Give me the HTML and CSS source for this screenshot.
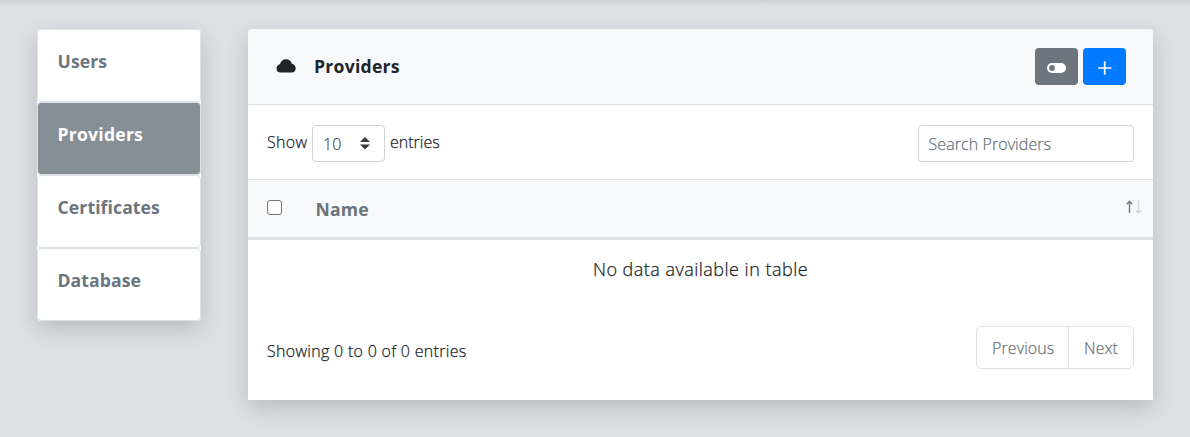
FILE: index.html
```
<!DOCTYPE html>
<html lang="en">
<head>
<meta charset="utf-8">
<title>Providers</title>
<link rel="stylesheet" href="styles.css">
</head>
<body>
<div class="topbar"></div>
<main class="layout">
  <nav class="side">
    <a class="side-item">Users</a>
    <a class="side-item active">Providers</a>
    <a class="side-item">Certificates</a>
    <a class="side-item">Database</a>
  </nav>
  <section class="card">
    <header class="card-header">
      <svg class="cloud" viewBox="0 0 20 14" width="20" height="14"><path d="M4.6 13.500A4.100 4.100 0 0 1 .5 9.500C.5 7.400 2 5.900 4 5C4.900 2.100 7 .3 10 .3c3 0 5.200 1.700 5.800 4.500 2.300.3 3.900 2.300 3.900 4.600s-1.700 4.100-3.900 4.100z"/></svg>
      <h1 class="title">Providers</h1>
      <div class="actions">
        <button class="btn btn-gray" aria-label="Toggle"><svg viewBox="0 0 20 10" width="20" height="10"><rect width="19" height="10" rx="5" fill="#fff"/><circle cx="5" cy="5" r="2.900" fill="#6c757d"/></svg></button>
        <button class="btn btn-blue" aria-label="Add"><svg viewBox="0 0 14 14" width="14" height="14"><path d="M6.700 .3v13.400M.2 7h13.200" stroke="#fff" stroke-width="1.700"/></svg></button>
      </div>
    </header>
    <div class="controls">
      <div class="length"><span class="show">Show</span>
        <span class="select"><span class="ten">10</span><svg viewBox="0 0 4 5" width="10" height="12.500"><path fill="#343a40" d="M2 0L0 2h4zm0 5L0 3h4z"/></svg></span>
        <span class="entries">entries</span></div>
      <input class="search" type="text" placeholder="Search Providers">
    </div>
    <div class="thead">
      <span class="check"></span>
      <span class="name">Name</span>
      <svg class="sort" viewBox="0 0 16 14" width="16" height="14" fill="none"><path d="M3.500 13V1.500M.8 4.200L3.500 1.200l2.700 3" stroke="#6c7b83" stroke-width="1.400"/><path d="M12.500 0v12.500M10 10.500l2.500 2.300 2.500-2.300" stroke="#d5d7da" stroke-width="1.500"/></svg>
    </div>
    <div class="empty"><span>No data available in table</span></div>
    <footer class="foot">
      <span class="info">Showing 0 to 0 of 0 entries</span>
      <div class="pager"><a class="prev">Previous</a><a class="next">Next</a></div>
    </footer>
  </section>
</main>
</body>
</html>
```
FILE: styles.css
```
* { box-sizing: border-box; }
body {
  margin: 0;
  height: 437px;
  overflow: hidden;
  background: #dde1e5;
  font: 300 16px/24px "Open Sans", "Noto Sans", sans-serif;
  color: #212529;
}
.topbar { height: 6px; background: linear-gradient(#cdd1d4, #dde1e5); }
.layout { display: flex; align-items: flex-start; gap: 47px; padding: 23px 37px 0; }
.side {
  width: 164px;
  display: flex;
  flex-direction: column;
  background: #fff;
  border-radius: 4px;
  box-shadow: 0 8px 22px rgba(0, 0, 0, .17);
}
.side-item {
  height: 73px;
  padding: 18px 19.500px;
  border: 1px solid #dee2e6;
  border-radius: 4px;
  color: #6c757d;
  font-weight: 700;
  font-size: 17.600px;
  line-height: 26px;
  letter-spacing: .1px;
}
.side-item.active { background: #868e96; color: #fff; letter-spacing: .22px; }
.card {
  width: 905px;
  height: 371px;
  background: #fff;
  border-radius: 4px 4px 0 0;
  box-shadow: 0 8px 22px rgba(0, 0, 0, .17);
}
.card-header {
  height: 76px;
  display: flex;
  align-items: center;
  padding: 0 27px 0 28px;
  background: #f8f9fb;
  border-bottom: 1px solid #dee2e6;
  border-radius: 4px 4px 0 0;
}
.cloud { margin-bottom: 2px; fill: #212529; }
.title { margin: 0 0 2px 18px; font-size: 17.600px; font-weight: 700; letter-spacing: .25px; }
.actions { display: flex; gap: 5px; margin-left: auto; }
.btn {
  width: 43px;
  height: 37px;
  display: flex;
  align-items: center;
  justify-content: center;
  padding: 3px 0 0;
  border: 0;
  border-radius: 4px;
}
.btn-gray { background: #6c757d; }
.btn-blue { background: #007bff; }
.controls {
  height: 75px;
  display: flex;
  justify-content: space-between;
  align-items: flex-start;
  padding: 20px 19px 0;
  border-bottom: 1px solid #dee2e6;
}
.length { display: flex; }
.show, .entries, .ten, .search, .empty, .info, .pager { -webkit-text-stroke: .25px currentColor; }
.show, .entries { padding-top: 5px; }
.show { width: 45px; letter-spacing: .3px; }
.select {
  width: 73px;
  height: 37px;
  display: flex;
  align-items: center;
  justify-content: space-between;
  margin-right: 5px;
  padding: 0 14px 0 10px;
  border: 1px solid #ced4da;
  border-radius: 4px;
  color: #495057;
}
.search {
  width: 216px;
  height: 37px;
  padding: 0 9.500px;
  border: 1px solid #ced4da;
  border-radius: 4px;
  font: inherit;
  letter-spacing: .08px;
}
.search::placeholder { color: #6c757d; opacity: 1; }
.thead {
  height: 60px;
  display: flex;
  align-items: center;
  padding: 0 11px 0 19px;
  background: #f8f9fb;
  border-bottom: 3px solid #dee2e6;
}
.check {
  width: 15px;
  height: 15px;
  margin-bottom: 2px;
  border: 1px solid #767676;
  border-radius: 3px;
  background: #fff;
}
.name { margin-left: 33.500px; font-size: 17.600px; font-weight: 700; color: #6c757d; letter-spacing: .2px; }
.sort { margin: 0 0 4px auto; }
.empty { height: 60px; padding-top: 17px; text-align: center; font-size: 18px; letter-spacing: .48px; }
.foot { display: flex; justify-content: space-between; padding: 26px 19px 0; }
.info { padding-top: 13px; letter-spacing: .3px; }
.pager { width: 158px; height: 43px; display: flex; border: 1px solid #dee2e6; border-radius: 5px; color: #6c757d; line-height: 42px; letter-spacing: .1px; }
.prev { width: 92px; padding-left: 15px; border-right: 1px solid #dee2e6; }
.next { padding-left: 15px; }
```
